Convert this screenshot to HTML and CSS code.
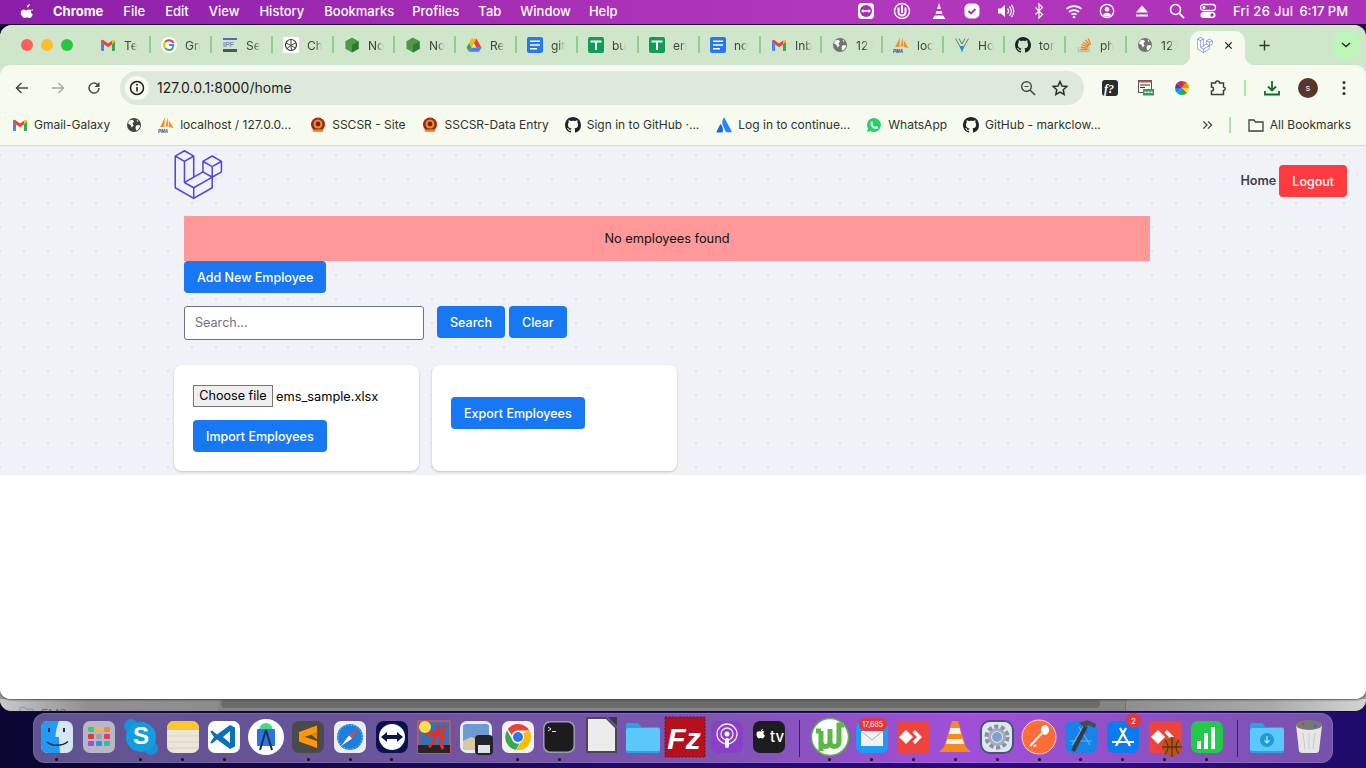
FILE: index.html
```html
<!DOCTYPE html>
<html lang="en">
<head>
<meta charset="utf-8">
<title>Employees</title>
<link rel="stylesheet" href="styles.css">
</head>
<body>
<svg class="defs" aria-hidden="true">
  <symbol id="gmail" viewBox="0 0 16 16"><path fill="#4285f4" d="M1 4v8.8A1.2 1.2 0 0 0 2.2 14H4V7.3z"/><path fill="#34a853" d="M15 4v8.8a1.2 1.2 0 0 1-1.2 1.2H12V7.3z"/><path fill="#ea4335" d="M1 4.2a1.4 1.4 0 0 1 2.2-1.1L8 6.6l4-2.9v3.6L8 10.2 4 7.3z"/><path fill="#fbbc04" d="M15 4.2a1.4 1.4 0 0 0-2.2-1.1L12 3.7v3.6z"/></symbol>
  <symbol id="globe" viewBox="0 0 16 16"><circle cx="8" cy="8" r="7" fill="currentColor"/><path fill="#f7faee" d="M3 3.6 6.6 2.7 8 4.6 6.4 6.6 7.6 8.4 5.6 10.4 4.6 8 2 6.6zM10 8.5l3.4-.6.8 1.6-2.4 3.6-1.6.4-.7-2.6zM10.5 2.4l2 1.5-1.2 1z"/></symbol>
  <symbol id="github" viewBox="0 0 16 16"><path fill="#1f2328" d="M8 0C3.58 0 0 3.58 0 8c0 3.54 2.29 6.53 5.47 7.59.4.07.55-.17.55-.38 0-.19-.01-.82-.01-1.49-2.01.37-2.53-.49-2.69-.94-.09-.23-.48-.94-.82-1.13-.28-.15-.68-.52-.01-.53.63-.01 1.08.58 1.23.82.72 1.21 1.87.87 2.33.66.07-.52.28-.87.51-1.07-1.78-.2-3.64-.89-3.64-3.95 0-.87.31-1.59.82-2.15-.08-.2-.36-1.02.08-2.12 0 0 .67-.21 2.2.82.64-.18 1.32-.27 2-.27s1.36.09 2 .27c1.53-1.04 2.2-.82 2.2-.82.44 1.1.16 1.92.08 2.12.51.56.82 1.27.82 2.15 0 3.07-1.87 3.75-3.65 3.95.29.25.54.73.54 1.48 0 1.07-.01 1.93-.01 2.2 0 .21.15.46.55.38A8.01 8.01 0 0 0 16 8c0-4.42-3.58-8-8-8z"/></symbol>
  <symbol id="node" viewBox="0 0 16 16"><path fill="#4f9a45" d="M8 .5 14.6 4.2v7.6L8 15.5 1.4 11.8V4.2z"/><path fill="#2f7a35" d="M8 8 14.6 4.2v7.6L8 15.5z"/></symbol>
  <symbol id="docs" viewBox="0 0 16 16"><rect width="16" height="16" rx="2" fill="#2a78ef"/><path fill="#fff" d="M3 3.5h10v1.6H3zM3 7.2h10v1.6H3zM3 10.9h7v1.6H3z"/></symbol>
  <symbol id="sheets" viewBox="0 0 16 16"><rect width="16" height="16" rx="2" fill="#0f9d58"/><path fill="#fff" d="M2.5 3.5h11v2h-4.500v7.500h-2V5.500h-4.500z"/></symbol>
  <symbol id="pma" viewBox="0 0 16 16"><path fill="#f0912d" d="M2 10 7 .5l-.6 9.500zM7.500 9.500 9.500.5l1 9zM11 10 10.800 3 15.500 11z"/></symbol>
  <symbol id="sscsr" viewBox="0 0 16 16"><circle cx="8" cy="7.500" r="7" fill="#a8201a"/><circle cx="8" cy="7" r="4.500" fill="#d9972a"/><circle cx="8" cy="7" r="2.400" fill="#8a1712"/><path fill="#d9972a" d="M2 12.500h12l-1.500 2.500h-9z"/></symbol>
  <symbol id="laravel" viewBox="0 0 50 52"><path fill="currentColor" d="M49.626 11.564a.809.809 0 0 1 .028.209v10.972a.8.8 0 0 1-.402.694l-9.209 5.302V39.25c0 .286-.152.55-.4.694L20.42 51.01c-.044.025-.092.041-.14.058-.018.006-.035.017-.054.022a.805.805 0 0 1-.41 0c-.022-.006-.042-.018-.063-.026-.044-.016-.09-.03-.132-.054L.402 39.944A.801.801 0 0 1 0 39.25V6.334c0-.072.01-.142.028-.21.006-.023.02-.044.028-.067.015-.042.029-.085.051-.124.015-.026.037-.047.055-.071.023-.032.044-.065.071-.093.023-.023.053-.04.079-.06.029-.024.055-.05.088-.069h.001l9.61-5.533a.802.802 0 0 1 .8 0l9.61 5.533h.002c.032.02.059.045.088.068.026.02.055.038.078.06.028.029.048.062.072.094.017.024.04.045.054.071.023.04.036.082.052.124.008.023.022.044.028.068a.809.809 0 0 1 .028.209v20.559l8.008-4.611v-10.51c0-.07.01-.141.028-.208.007-.024.02-.045.028-.068.016-.042.03-.085.052-.124.015-.026.037-.047.054-.071.024-.032.044-.065.072-.093.023-.023.052-.04.078-.06.03-.024.056-.05.088-.069h.001l9.611-5.533a.801.801 0 0 1 .8 0l9.61 5.533c.034.02.06.045.09.068.025.02.054.038.077.06.028.029.048.062.072.094.018.024.04.045.054.071.023.039.036.082.052.124.009.023.022.044.028.068zm-1.574 10.718v-9.124l-3.363 1.936-4.646 2.675v9.124l8.01-4.611zm-9.61 16.505v-9.13l-4.57 2.61-13.05 7.448v9.216l17.62-10.144zM1.602 7.719v31.068L19.22 48.93v-9.214l-9.204-5.209-.003-.002-.004-.002c-.031-.018-.057-.044-.086-.066-.025-.02-.054-.036-.076-.058l-.002-.003c-.026-.025-.044-.056-.066-.084-.02-.027-.044-.05-.06-.078l-.001-.003c-.018-.03-.029-.066-.042-.1-.013-.03-.03-.058-.038-.09v-.001c-.01-.038-.012-.078-.016-.117-.004-.03-.012-.06-.012-.09v-.002-21.481L4.965 9.654 1.602 7.72zm8.81-5.994L2.405 6.334l8.005 4.609 8.006-4.61-8.006-4.608zm4.164 28.764l4.645-2.674V7.719l-3.363 1.936-4.646 2.675v20.096l3.364-1.937zM39.243 7.164l-8.006 4.609 8.006 4.609 8.005-4.61-8.005-4.608zm-.801 10.605l-4.646-2.675-3.363-1.936v9.124l4.645 2.674 3.364 1.937v-9.124zM20.02 38.33l11.743-6.704 5.87-3.35-8-4.606-9.211 5.303-8.395 4.833 7.993 4.524z"/></symbol>
  <symbol id="anydesk" viewBox="0 0 42 45"><rect x="5" y="8" width="32" height="32" rx="3" fill="#ef443b"/><path fill="#fff" d="M14 17l7 7-7 7-7-7z"/><path fill="#fff" d="M23 17l7 7-7 7 -2.500-2.500 4.500-4.500-4.500-4.500z"/></symbol>
  <symbol id="folder" viewBox="0 0 42 45"><path fill="#2f9fe0" d="M4 12a2 2 0 0 1 2-2h10l4 4h16a2 2 0 0 1 2 2v22a2 2 0 0 1-2 2H6a2 2 0 0 1-2-2z"/><path fill="#5ac8fa" d="M4 17a2 2 0 0 1 2-2h30a2 2 0 0 1 2 2v19a2 2 0 0 1-2 2H6a2 2 0 0 1-2-2z"/></symbol>
</svg>

<header class="menubar">
  <svg class="apple" viewBox="0 0 16 18"><path fill="#fff" d="M11.200 1c.1 1-.3 2-.9 2.700-.6.700-1.600 1.300-2.500 1.200-.1-1 .4-2 1-2.600.6-.7 1.600-1.200 2.400-1.300zM14.300 6.400c-.1.100-1.800 1-1.800 3.100 0 2.400 2.100 3.200 2.200 3.300-.1.100-.4 1.200-1.100 2.300-.7 1-1.500 2-2.600 2-1.200 0-1.500-.7-2.900-.7s-1.800.7-2.900.7c-1.100 0-1.900-1.100-2.700-2.200C1 13.400.3 11.100 1.300 9.200c.6-1 1.700-1.700 2.800-1.700 1.200 0 2.100.8 2.900.8.800 0 1.800-.9 3.100-.9.500 0 2.600.1 4.200 2z"/></svg>
  <nav class="menus"><b>Chrome</b><span>File</span><span>Edit</span><span>View</span><span>History</span><span>Bookmarks</span><span class="pull2">Profiles</span><span class="pull1">Tab</span><span class="pull1">Window</span><span class="pull2">Help</span></nav>
  <div class="status">
    <svg class="st" viewBox="0 0 18 18"><rect x="1" y="1" width="16" height="16" rx="4" fill="#fff"/><circle cx="9" cy="9" r="6" fill="#a82fb5"/><path fill="#fff" d="M4 9l2.500-2v1.200h5V7L14 9l-2.500 2V9.800h-5V11z"/></svg>
    <svg class="st ml18" viewBox="0 0 18 18"><circle cx="9" cy="9" r="7.500" fill="none" stroke="#fff" stroke-width="1.400"/><path d="M5.500 5.500v4.500a3.500 3.500 0 0 0 7 0V5.500M9 3v8" fill="none" stroke="#fff" stroke-width="2"/></svg>
    <svg class="st ml19" viewBox="0 0 18 18"><path fill="#fff" d="M9 1l2 6H7zM6.400 9h5.200l.9 3h-7zM4.800 13.500h8.400l2.300 3.500h-13z"/></svg>
    <svg class="st ml15" viewBox="0 0 18 18"><rect x="1.500" y="1.500" width="15" height="15" rx="5" fill="#fff"/><path d="M5.500 9l2.500 2.500 4.500-4.500" fill="none" stroke="#a82fb5" stroke-width="1.800"/></svg>
    <svg class="st ml16" viewBox="0 0 18 18"><path fill="#fff" d="M1 6.500h3l4-3.500v12l-4-3.500H1z"/><path d="M10.500 6.500a3.500 3.500 0 0 1 0 5M12.500 4.500a6.500 6.500 0 0 1 0 9M14.500 3a9 9 0 0 1 0 12" fill="none" stroke="#fff" stroke-width="1.200"/></svg>
    <svg class="st ml15" viewBox="0 0 18 18"><path d="M5.500 5.500l7 7L9 16V2l3.500 3.500-7 7" fill="none" stroke="#fff" stroke-width="1.200"/></svg>
    <svg class="st ml17" viewBox="0 0 18 18"><path d="M1.500 7a11 11 0 0 1 15 0M4 10a7.500 7.500 0 0 1 10 0M6.500 12.700a3.800 3.800 0 0 1 5 0" fill="none" stroke="#fff" stroke-width="1.700"/><circle cx="9" cy="15" r="1.300" fill="#fff"/></svg>
    <svg class="st ml15" viewBox="0 0 18 18"><circle cx="9" cy="9" r="6.700" fill="none" stroke="#fff" stroke-width="1.300"/><circle cx="9" cy="7.300" r="2.300" fill="#fff"/><path fill="#fff" d="M4.800 13a5 5 0 0 1 8.400 0 5.800 5.800 0 0 1-8.400 0z"/></svg>
    <svg class="st ml17" viewBox="0 0 18 18"><path fill="#fff" d="M9 3.500l6 7H3zM3 12.500h12v2H3z"/></svg>
    <svg class="st ml17" viewBox="0 0 18 18"><circle cx="7.500" cy="7.500" r="5" fill="none" stroke="#fff" stroke-width="1.500"/><path d="M11.300 11.300l4.700 4.700" stroke="#fff" stroke-width="1.800"/></svg>
    <svg class="st ml13" viewBox="0 0 18 18"><rect x="1.500" y="2.500" width="15" height="6" rx="3" fill="none" stroke="#fff" stroke-width="1.300"/><circle cx="5" cy="5.500" r="1.500" fill="#fff"/><rect x="1.500" y="10" width="15" height="6" rx="3" fill="#fff"/><circle cx="13" cy="13" r="1.700" fill="#a82fb5"/></svg>
    <span class="clock">Fri 26 Jul</span><span class="clock-time">6:17 PM</span>
  </div>
</header>

<div class="window">
  <div class="tabstrip">
    <div class="lights"><i class="red"></i><i class="amber"></i><i class="green"></i></div>
    <div class="tab"><svg class="fav"><use href="#gmail"/></svg><span class="tt">Te</span></div>
    <div class="tab"><svg class="fav" viewBox="0 0 16 16"><circle cx="8" cy="8" r="8" fill="#fff"/><path d="M12.500 6.200A5 5 0 0 0 4.100 5" fill="none" stroke="#ea4335" stroke-width="2"/><path d="M4.100 5a5 5 0 0 0 0 6" fill="none" stroke="#fbbc04" stroke-width="2"/><path d="M4.100 11a5 5 0 0 0 8 .2" fill="none" stroke="#34a853" stroke-width="2"/><path fill="#4285f4" d="M8 7h5.200c.3 2-.3 3.600-1.200 4.800L10.500 10.500c.5-.4.800-1 .9-1.600H8z"/></svg><span class="tt">Gn</span></div>
    <div class="tab"><svg class="fav" viewBox="0 0 16 16"><path fill="#4a6fb5" d="M1 1h14v2H1z"/><text x="1" y="10" class="ip-t">IPF</text><path fill="#555" d="M1 12h14v3H1z"/></svg><span class="tt">Se</span></div>
    <div class="tab"><svg class="fav" viewBox="0 0 16 16"><rect width="16" height="16" rx="2" fill="#fff"/><circle cx="8" cy="8" r="5.500" fill="none" stroke="#333" stroke-width="1.200"/><path d="M8 2.500v6l4.500 2.500M3 6l5 2.500-4 3M13 5.500 8 8.500l.5 5" fill="none" stroke="#333" stroke-width=".9"/></svg><span class="tt">Ch</span></div>
    <div class="tab"><svg class="fav"><use href="#node"/></svg><span class="tt">No</span></div>
    <div class="tab"><svg class="fav"><use href="#node"/></svg><span class="tt">No</span></div>
    <div class="tab"><svg class="fav" viewBox="0 0 16 16"><path fill="#fbbc04" d="M5.500 1.500h5l-5 9L3 6z"/><path fill="#34a853" d="M.5 10.700 3 6l2.500 4.500 -2.500 4.200z"/><path fill="#ea4335" d="M10.500 1.500 15.500 10.700h-5L8 6z"/><path fill="#4285f4" d="M5.500 10.700h10L13 14.700H3z"/></svg><span class="tt">Re</span></div>
    <div class="tab"><svg class="fav"><use href="#docs"/></svg><span class="tt">git</span></div>
    <div class="tab"><svg class="fav"><use href="#sheets"/></svg><span class="tt">bu</span></div>
    <div class="tab"><svg class="fav"><use href="#sheets"/></svg><span class="tt">en</span></div>
    <div class="tab"><svg class="fav"><use href="#docs"/></svg><span class="tt">no</span></div>
    <div class="tab"><svg class="fav"><use href="#gmail"/></svg><span class="tt">Inb</span></div>
    <div class="tab"><svg class="fav globe-tab"><use href="#globe"/></svg><span class="tt tt-long">127</span></div>
    <div class="tab"><svg class="fav" viewBox="0 0 16 16"><use href="#pma" width="16" height="16"/><text x="0" y="15.500" class="pma-t">PMA</text></svg><span class="tt">loc</span></div>
    <div class="tab"><svg class="fav" viewBox="0 0 16 16"><path fill="none" stroke="#6b7a6b" stroke-width="1" d="M1.500 1.500 8 13 14.500 1.500M5 1.500 8 7l3-5.500"/><path fill="#2a8fd8" d="M5.500 9h5L8 15.500z"/></svg><span class="tt">Ho</span></div>
    <div class="tab"><svg class="fav"><use href="#github"/></svg><span class="tt">tor</span></div>
    <div class="tab"><svg class="fav" viewBox="0 0 16 16"><path d="M2.500 10v4.500h10.500V10" fill="none" stroke="#bcbbbb" stroke-width="1.400"/><path d="M4.500 12.500h7M4.700 10.200l6.800.9M5.500 7.700l6.500 2.200M7 5.200l5.700 3.700M9.500 3l4.200 5.300M12.200 1.500l2.500 6" fill="none" stroke="#f48024" stroke-width="1.300"/></svg><span class="tt">ph</span></div>
    <div class="tab tab-last"><svg class="fav globe-tab"><use href="#globe"/></svg><span class="tt tt-long">127</span></div>
    <div class="tab-active"><svg class="fav lv"><use href="#laravel"/></svg><svg class="tab-x" viewBox="0 0 10 10"><path d="M1.500 1.500l7 7M8.500 1.500l-7 7" stroke="#1f1f1f" stroke-width="1.400"/></svg></div>
    <svg class="newtab" viewBox="0 0 12 12"><path d="M6 .5v11M.5 6h11" stroke="#2c3a2c" stroke-width="1.500"/></svg>
    <div class="tabmenu"><svg viewBox="0 0 10 6"><path d="M1 1l4 3.500L9 1" fill="none" stroke="#1f2a1f" stroke-width="1.500"/></svg></div>
  </div>

  <div class="toolbar">
    <svg class="tbi" viewBox="0 0 16 16"><path d="M14 8H2.500M7.500 3l-5 5 5 5" fill="none" stroke="#444c44" stroke-width="1.500"/></svg>
    <svg class="tbi ml20" viewBox="0 0 16 16"><path d="M2 8h11.500M8.500 3l5 5-5 5" fill="none" stroke="#a3a8a1" stroke-width="1.500"/></svg>
    <svg class="tbi ml20" viewBox="0 0 16 16"><path d="M13 8a5 5 0 1 1-1.500-3.500L13 6" fill="none" stroke="#444c44" stroke-width="1.500"/><path fill="#444c44" d="M13.500 2v5h-5z"/></svg>
    <div class="omnibox">
      <span class="infochip"><svg viewBox="0 0 16 16"><circle cx="8" cy="8" r="6.500" fill="none" stroke="#1f1f1f" stroke-width="1.500"/><path d="M8 7v4.500" stroke="#1f1f1f" stroke-width="1.600"/><circle cx="8" cy="4.800" r="1" fill="#1f1f1f"/></svg></span>
      <span class="url">127.0.0.1:8000/home</span>
      <svg class="omni-i push" viewBox="0 0 16 16"><circle cx="6.500" cy="6.500" r="4.800" fill="none" stroke="#444c44" stroke-width="1.400"/><path d="M10 10l5 5" stroke="#444c44" stroke-width="1.600"/><path d="M4.500 6.500h4" stroke="#444c44" stroke-width="1.200"/></svg>
      <svg class="omni-i ml16" viewBox="0 0 16 16"><path d="M8 1.500l2 4.500 4.800.5-3.600 3.200 1 4.800L8 12l-4.200 2.500 1-4.800L1.200 6.500 6 6z" fill="none" stroke="#2a332a" stroke-width="1.500"/></svg>
    </div>
    <svg class="tbx ml18" viewBox="0 0 16 16"><rect width="16" height="16" rx="3" fill="#2b2b2b"/><text x="2" y="12.500" class="fq">f?</text></svg>
    <svg class="tbx ml20" viewBox="0 0 16 16"><rect x=".5" y=".5" width="13" height="12" fill="#f7faee" stroke="#555" stroke-width="1"/><path fill="#c0504d" d="M.5.500h13v2h-13z"/><path d="M2 5h10M2 7.500h5" stroke="#333" stroke-width="1"/><rect x="5" y="9" width="11" height="6.500" fill="#3f9a55"/><path d="M6.500 12.200h8" stroke="#fff" stroke-width="1.500" stroke-dasharray="2 1"/></svg>
    <svg class="tbx ml20" viewBox="0 0 16 16"><path fill="#e53935" d="M8 8V1a7 7 0 0 1 4.500 1.600z"/><path fill="#fb8c00" d="M8 8l4.500-5.400A7 7 0 0 1 15 8z"/><path fill="#fdd835" d="M8 8h7a7 7 0 0 1-2 5z"/><path fill="#43a047" d="M8 8l5 5a7 7 0 0 1-5 2z"/><path fill="#00acc1" d="M8 8v7a7 7 0 0 1-5-2z"/><path fill="#1e88e5" d="M8 8l-5 5a7 7 0 0 1-2-5z"/><path fill="#5e35b1" d="M8 8H1a7 7 0 0 1 2-5z"/><path fill="#d81b60" d="M8 8 3 3a7 7 0 0 1 5-2z"/></svg>
    <svg class="tbx ml20" viewBox="0 0 16 16"><path d="M1.500 3H5.500a2 2 0 0 1 4 0h4v4a1.700 1.700 0 0 1 0 3.500V14.500H1.500V11a2 2 0 0 0 0-4z" fill="none" stroke="#33413a" stroke-width="1.500"/></svg>
    <i class="tb-sep"></i>
    <svg class="tbx ml18" viewBox="0 0 16 16"><path d="M8 1v9M4 6.500 8 10.500l4-4" fill="none" stroke="#0b6b2f" stroke-width="1.800"/><path d="M1 11v3.500h14V11" fill="none" stroke="#0b6b2f" stroke-width="1.800"/></svg>
    <span class="avatar">s</span>
    <svg class="dots3" viewBox="0 0 4 16"><circle cx="2" cy="2.500" r="1.500" fill="#333"/><circle cx="2" cy="8" r="1.500" fill="#333"/><circle cx="2" cy="13.500" r="1.500" fill="#333"/></svg>
  </div>

  <div class="bookmarks">
    <a class="bm"><svg class="fav"><use href="#gmail"/></svg>Gmail-Galaxy</a>
    <a class="bm"><svg class="fav globe-dark"><use href="#globe"/></svg></a>
    <a class="bm"><svg class="fav" viewBox="0 0 16 16"><use href="#pma" width="16" height="16"/><text x="0" y="15.500" class="pma-t">PMA</text></svg>localhost / 127.0.0...</a>
    <a class="bm nudge3"><svg class="fav"><use href="#sscsr"/></svg>SSCSR - Site</a>
    <a class="bm nudge1"><svg class="fav"><use href="#sscsr"/></svg>SSCSR-Data Entry</a>
    <a class="bm"><svg class="fav"><use href="#github"/></svg>Sign in to GitHub ·...</a>
    <a class="bm nudge1"><svg class="fav" viewBox="0 0 16 16"><path fill="#1868db" d="M5 7.500c-.3-.4-.7-.3-.9.100L.5 14.700c-.2.400 0 .8.500.8h5c.2 0 .4-.1.500-.3 1-2.200.4-5.400-1.500-7.700z"/><path fill="#2684ff" d="M7.600.9C6 3.400 5.800 6.500 7.100 9.100l2.600 5.700c.1.200.3.400.5.400h5c.4 0 .700-.4.500-.8L8.500.9c-.2-.4-.7-.4-.9 0z"/></svg>Log in to continue...</a>
    <a class="bm"><svg class="fav" viewBox="0 0 16 16"><path fill="#25d366" d="M8 1a7 7 0 0 0-6 10.600L1 15l3.500-.9A7 7 0 1 0 8 1z"/><path fill="#fff" d="M5.800 4.500c.3 0 .5 0 .6.300l.7 1.500c0 .2 0 .4-.2.600l-.5.600c.6 1.200 1.500 2 2.800 2.600l.7-.8c.2-.2.300-.2.500-.1l1.500.7c.2.100.3.300.2.600-.2 1-1 1.600-2 1.600-2.900-.2-5.500-2.800-5.600-5.600 0-1.100.5-1.800 1.300-2z"/></svg>WhatsApp</a>
    <a class="bm"><svg class="fav"><use href="#github"/></svg>GitHub - markclow...</a>
    <span class="bm-right">
      <svg class="chev" viewBox="0 0 12 10"><path d="M1.500 1l4 4-4 4M6.500 1l4 4-4 4" fill="none" stroke="#3a443a" stroke-width="1.400"/></svg>
      <i class="bm-sep"></i>
      <a class="bm all"><svg class="fav" viewBox="0 0 16 16"><path d="M1 3h5l1.500 2H15v9H1z" fill="none" stroke="#3a443a" stroke-width="1.300"/></svg>All Bookmarks</a>
    </span>
  </div>

  <main class="page">
    <section class="app">
      <div class="topnav">
        <svg class="logo"><use href="#laravel"/></svg>
        <div class="navlinks"><a class="home">Home</a><button class="btn logout" type="button">Logout</button></div>
      </div>
      <div class="content">
        <div class="alert">No employees found</div>
        <button class="btn" type="button">Add New Employee</button>
        <form class="search">
          <input class="search-input" type="text" placeholder="Search...">
          <button class="btn search-go" type="button">Search</button>
          <button class="btn" type="button">Clear</button>
        </form>
        <div class="cards">
          <div class="card">
            <div class="file"><button class="choose" type="button">Choose file</button><span class="fname">ems_sample.xlsx</span></div>
            <button class="btn" type="button">Import Employees</button>
          </div>
          <div class="card card-export">
            <button class="btn" type="button">Export Employees</button>
          </div>
        </div>
      </div>
    </section>
  </main>
</div>

<div class="behind">
  <div class="b-left"><svg class="b-folder" viewBox="0 0 16 12"><path d="M1 11V1h5l1.500 2H15v8z" fill="none" stroke="#6f93c4" stroke-width="1"/></svg><span>EMS</span></div>
  <div class="b-track"><div class="b-thumb"></div></div>
  <div class="b-right"></div>
</div>

<footer class="dock">
  <div class="dk"><svg viewBox="0 0 42 45"><rect x="5" y="8" width="32" height="32" rx="7" fill="#d6e6f2"/><path fill="#1f9bf5" d="M12 8h11c-2 5-3.500 10-3.500 16H23c0 5 .5 11 1 16H12a7 7 0 0 1-7-7V15a7 7 0 0 1 7-7z"/><path d="M13 15v4M28 15v4" stroke="#1d2a44" stroke-width="2"/><path d="M11 29c5 4.500 15 4.500 21-.5" fill="none" stroke="#1d2a44" stroke-width="1.600"/></svg><i class="dot"></i></div>
  <div class="dk"><svg viewBox="0 0 42 45"><rect x="5" y="8" width="32" height="32" rx="7" fill="#b9b7c7"/><g><rect x="10" y="14" width="6" height="5" rx="1" fill="#3ccf5b"/><rect x="18" y="14" width="6" height="5" rx="1" fill="#f5b53a"/><rect x="26" y="14" width="6" height="5" rx="1" fill="#f28c2a"/><rect x="10" y="21" width="6" height="5" rx="1" fill="#e13b3b"/><rect x="18" y="21" width="6" height="5" rx="1" fill="#9ea3a8"/><rect x="26" y="21" width="6" height="5" rx="1" fill="#e03a6a"/><rect x="10" y="28" width="6" height="5" rx="1" fill="#9a52d6"/><rect x="18" y="28" width="6" height="5" rx="1" fill="#2f8df0"/><rect x="26" y="28" width="6" height="5" rx="1" fill="#1fc796"/></g></svg><i class="dot dot-off"></i></div>
  <div class="dk"><svg viewBox="0 0 42 45"><circle cx="11" cy="13" r="7" fill="#1a8fd8"/><circle cx="31" cy="35" r="7" fill="#1a8fd8"/><circle cx="21" cy="24" r="15" fill="#119ee0"/><text x="21" y="31" class="d-s">S</text></svg><i class="dot"></i></div>
  <div class="dk"><svg viewBox="0 0 42 45"><rect x="5" y="8" width="32" height="32" rx="7" fill="#ece6d8"/><path fill="#fdc72f" d="M5 15a7 7 0 0 1 7-7h18a7 7 0 0 1 7 7v2H5z"/><path d="M5 23h32M5 29h32M5 35h32" stroke="#d8d2c4" stroke-width="1"/></svg><i class="dot"></i></div>
  <div class="dk"><svg viewBox="0 0 42 45"><rect x="5" y="8" width="32" height="32" rx="7" fill="#fff"/><path fill="#0a70b8" d="M27 12l5 2.500v19L27 36 14 26.500 9 30.500l-1.800-1L11 24l-3.800-5.500 1.800-1 5 4zM27 18l-7 6 7 6z"/></svg><i class="dot"></i></div>
  <div class="dk"><svg viewBox="0 0 42 45"><circle cx="21" cy="24" r="18" fill="#fff"/><path fill="#3ddc84" d="M14.500 16a6.500 6 0 0 1 13 0z"/><rect x="12" y="16" width="18" height="17" rx="1" fill="#2a74e6"/><path d="M21 17l-6 20M21 17l6 20" stroke="#1d2f4a" stroke-width="2"/></svg><i class="dot dot-off"></i></div>
  <div class="dk"><svg viewBox="0 0 42 45"><rect x="5" y="8" width="32" height="32" rx="7" fill="#4a4a4a"/><path fill="#ff9800" d="M12 19l18-6.500v7L12 26zM12 22l18 6v7l-18-6.500z"/><path fill="#e08600" d="M30 26.500v-7l-6 2z"/></svg><i class="dot"></i></div>
  <div class="dk"><svg viewBox="0 0 42 45"><rect x="5" y="8" width="32" height="32" rx="7" fill="#eceef0"/><circle cx="21" cy="24" r="13" fill="#1c7fdc"/><circle cx="21" cy="24" r="12" fill="none" stroke="#bfe0f8" stroke-width="1" stroke-dasharray="1 2"/><path fill="#e9423a" d="M30 15l-10 7.500 3 3z"/><path fill="#fff" d="M12 33l8-10.500 3 3z"/></svg><i class="dot"></i></div>
  <div class="dk"><svg viewBox="0 0 42 45"><rect x="5" y="8" width="32" height="32" rx="8" fill="#0b1250"/><circle cx="21" cy="24" r="13" fill="#fff"/><path fill="#0b1250" d="M10 24l6-5v3h10v-3l6 5-6 5v-3H16v3z"/></svg><i class="dot"></i></div>
  <div class="dk"><svg viewBox="0 0 42 45"><rect x="5" y="8" width="32" height="32" fill="#3a6fb0" stroke="#e05550" stroke-width="1.500"/><path fill="#2a2320" d="M5 32h32v8H5z"/><circle cx="12" cy="14" r="6" fill="#f7e04b"/><path d="M16 34c5-4 8-14 10-22M32 12c-3 8-7 14-2 24M13 22c6-3 14-1 19 3" fill="none" stroke="#f02a1e" stroke-width="3"/></svg><i class="dot dot-off"></i></div>
  <div class="dk"><svg viewBox="0 0 42 45"><rect x="5" y="8" width="32" height="32" rx="7" fill="#e9edf0"/><rect x="8" y="11" width="26" height="26" rx="3" fill="#6a9bd2"/><path fill="#d8c8a8" d="M8 28l8-4 8 3 10-2v9a3 3 0 0 1-3 3H11a3 3 0 0 1-3-3z"/><rect x="20" y="22" width="18" height="20" rx="4" fill="#20242c"/><rect x="23" y="32" width="12" height="8" fill="#dfe3e6"/></svg><i class="dot dot-off"></i></div>
  <div class="dk"><svg viewBox="0 0 42 45"><rect x="5" y="8" width="32" height="32" rx="7" fill="#f2f2f2"/><path fill="#ea4335" d="M21 11a13 13 0 0 1 11.300 6.500H21a6.500 6.500 0 0 0-6.200 4.500l-4-5.800A13 13 0 0 1 21 11z"/><path fill="#34a853" d="M10 17.500 15.600 27.500a6.500 6.500 0 0 0 6.900 3l-3.500 6.400A13 13 0 0 1 10 17.500z"/><path fill="#fbbc04" d="M32.300 17.500A13 13 0 0 1 19.500 37l5.300-9.500a6.500 6.500 0 0 0 .5-6.500z"/><circle cx="21" cy="24" r="6" fill="#fff"/><circle cx="21" cy="24" r="5" fill="#2a78e8"/></svg><i class="dot"></i></div>
  <div class="dk"><svg viewBox="0 0 42 45"><rect x="5" y="8" width="32" height="32" rx="7" fill="#9aa0a8"/><rect x="6.500" y="9.500" width="29" height="29" rx="6" fill="#1c1c1e"/><path d="M10 14l3 2-3 2" fill="none" stroke="#e8e8e8" stroke-width="1"/><path d="M14 18.500h4" stroke="#e8e8e8" stroke-width="1"/></svg><i class="dot"></i></div>
  <div class="dk"><svg viewBox="0 0 42 45"><path fill="#4a4a4a" d="M6 4h20l11 11v25H6z"/><path fill="#ececec" d="M8 6h18l9 9v23H8z"/><path fill="#3a3a3a" d="M28 4h9v9z"/></svg><i class="dot dot-off"></i></div>
  <div class="dk"><svg viewBox="0 0 42 45"><use href="#folder"/></svg><i class="dot dot-off"></i></div>
  <div class="dk"><svg viewBox="0 0 42 45"><rect x="1" y="4" width="40" height="40" fill="#b5101d" stroke="#7a0a14" stroke-width="1" stroke-dasharray="2 1.500"/><text x="20" y="36" class="d-fz">Fz</text></svg><i class="dot dot-off"></i></div>
  <div class="dk"><svg viewBox="0 0 42 45"><rect x="5" y="8" width="32" height="32" rx="7" fill="#8a3fc9"/><circle cx="21" cy="21" r="10" fill="none" stroke="#f3e6fb" stroke-width="1.300"/><circle cx="21" cy="21" r="6" fill="none" stroke="#f3e6fb" stroke-width="1.300"/><circle cx="21" cy="21" r="2.500" fill="#fff"/><rect x="19" y="25" width="4" height="10" rx="2" fill="#fff"/></svg><i class="dot dot-off"></i></div>
  <div class="dk"><svg viewBox="0 0 42 45"><rect x="5" y="8" width="32" height="32" rx="7" fill="#1b1d1e"/><text x="22" y="29" class="d-tv">tv</text><path fill="#fff" d="M13 18.500c1-.8 2.800-.8 3.500 0-1.600 1-1.300 3.200.4 3.900-.6 1.600-1.600 3-2.500 3-.7 0-1-.4-1.800-.4s-1.200.4-1.800.4c-1.300 0-3.400-4.500-1.700-6.400 1-1.100 2.400-.8 3.900-.5zM13.100 18c0-1 .8-2 1.900-2.100 0 1.100-.8 2.100-1.900 2.100z"/></svg><i class="dot dot-off"></i></div>
  <i class="dk-sep"></i>
  <div class="dk"><svg viewBox="0 0 42 45"><circle cx="21" cy="24" r="18.500" fill="#fff" stroke="#59b944" stroke-width="1.500"/><path d="M12 18v11a4.500 4.500 0 0 0 9 0V16M21 29a4.500 4.500 0 0 0 9 0V12h5" fill="none" stroke="#59b944" stroke-width="5"/><path d="M12 18H7M12 29v9" stroke="#59b944" stroke-width="5" fill="none"/></svg><i class="dot"></i></div>
  <div class="dk"><svg viewBox="0 0 42 45"><rect x="5" y="8" width="32" height="32" rx="7" fill="#1d9bf6"/><rect x="10" y="18" width="22" height="15" fill="#f2f2f2"/><path d="M10 18l11 9 11-9" fill="none" stroke="#a8b0b8" stroke-width="1"/></svg><i class="dot"></i><span class="badge badge-wide">17,685</span></div>
  <div class="dk"><svg viewBox="0 0 42 45"><use href="#anydesk"/></svg><i class="dot"></i></div>
  <div class="dk"><svg viewBox="0 0 42 45"><path fill="#f58a1f" d="M18 8h6l8 26 5 5H5l5-5z"/><path fill="#f2f2f2" d="M16.500 15h9l1.500 6H15zM13.500 26h15l1.500 5H12z"/></svg><i class="dot"></i></div>
  <div class="dk"><svg viewBox="0 0 42 45"><rect x="5" y="8" width="32" height="32" rx="9" fill="#dfe6f3" stroke="#46566e" stroke-width="2"/><circle cx="21" cy="24" r="10" fill="none" stroke="#8a93a0" stroke-width="5" stroke-dasharray="4 2.300"/><circle cx="21" cy="24" r="7.500" fill="none" stroke="#a7adb7" stroke-width="3"/><circle cx="21" cy="24" r="5" fill="#7fa1d8"/></svg><i class="dot"></i></div>
  <div class="dk"><svg viewBox="0 0 42 45"><circle cx="21" cy="24" r="17" fill="#ff6c37" stroke="#f5d9cc" stroke-width="1"/><path d="M12 33 24 20" stroke="#fff" stroke-width="2"/><ellipse cx="27" cy="17" rx="4" ry="5" fill="#fff"/><path d="M15 34l4-1-2-2z" fill="#fff"/></svg><i class="dot"></i></div>
  <div class="dk"><svg viewBox="0 0 42 45"><rect x="5" y="8" width="32" height="32" rx="7" fill="#1782e8"/><path d="M12 32 23 14M30 32 19 14M10 28h22" stroke="#64b5f6" stroke-width="1.200" fill="none"/><path d="M13 38 26 13" stroke="#3a3a3c" stroke-width="4"/><path fill="#4a4a4e" d="M19 10l8-3 9 4-1 4-7-3-3 3z"/></svg><i class="dot"></i></div>
  <div class="dk"><svg viewBox="0 0 42 45"><rect x="5" y="8" width="32" height="32" rx="7" fill="#0a7cf0"/><path d="M14 33 24 15M28 33 18 15M10 29h22" stroke="#fff" stroke-width="2.200" fill="none"/></svg><i class="dot"></i><span class="badge">2</span></div>
  <div class="dk"><svg viewBox="0 0 42 45"><use href="#anydesk"/><circle cx="28" cy="34" r="10" fill="#b4541c"/><path d="M18 34h20M28 24v20M21 27c4 4 4 10 0 14M35 27c-4 4-4 10 0 14" stroke="#4a2008" stroke-width="1" fill="none"/></svg><i class="dot"></i></div>
  <div class="dk"><svg viewBox="0 0 42 45"><rect x="5" y="8" width="32" height="32" rx="7" fill="#22c94a"/><rect x="11" y="28" width="4" height="8" fill="#fff"/><rect x="18" y="20" width="4" height="16" fill="#fff"/><rect x="25" y="14" width="4" height="22" fill="#fff"/></svg><i class="dot"></i></div>
  <i class="dk-sep"></i>
  <div class="dk"><svg viewBox="0 0 42 45"><use href="#folder"/><circle cx="21" cy="27" r="7" fill="#1d9ad8"/><path d="M21 23v7M18.500 27.500 21 30l2.500-2.500" fill="none" stroke="#bde8fb" stroke-width="1.200"/></svg><i class="dot dot-off"></i></div>
  <div class="dk"><svg viewBox="0 0 42 45"><path fill="#e6e6e6" d="M8 12h26l-3 26a3 3 0 0 1-3 2H14a3 3 0 0 1-3-2z"/><ellipse cx="21" cy="12" rx="13" ry="5" fill="#77787a"/><circle cx="15" cy="11" r="1.500" fill="#c94040"/><circle cx="23" cy="10" r="1.500" fill="#3f9a55"/><circle cx="27" cy="13" r="1.500" fill="#3f6ab0"/><path d="M15 20l2 16M21 20v16M27 20l-2 16" stroke="#c9c9c9" stroke-width="1"/></svg><i class="dot dot-off"></i></div>
</footer>
</body>
</html>
```

FILE: styles.css
```css
* { box-sizing: border-box; }
html, body { margin: 0; padding: 0; }
body {
  width: 1366px;
  height: 768px;
  overflow: hidden;
  display: flex;
  flex-direction: column;
  font-family: Inter, "Liberation Sans", sans-serif;
  background: linear-gradient(90deg, #0a0530 0%, #140a55 30%, #230a7a 60%, #2c0c85 85%, #1d0a68 100%);
}
.defs { position: absolute; width: 0; height: 0; }
.menubar {
  height: 25px;
  flex: none;
  display: flex;
  align-items: center;
  padding: 0 0 2px 20px;
  border-bottom: 1px solid #14081c;
  color: #fff;
  font-size: 13px;
  background: linear-gradient(90deg, #8a1fa9 0%, #a52db4 35%, #b138bd 60%, #ad31b8 100%);
}
.apple { width: 14px; height: 16px; margin-right: 19px; }
.menus { display: flex; gap: 20px; }
.menus b { font-weight: 700; }
.menus span { font-weight: 500; }
.pull1 { margin-left: -1px; }
.pull2 { margin-left: -2px; }
.status { margin-left: auto; display: flex; align-items: center; margin-right: 18px; }
.st { width: 18px; height: 18px; }
.clock { margin-left: 16px; font-weight: 500; letter-spacing: .3px; }
.clock-time { margin-left: 6px; font-weight: 500; }
.ml13 { margin-left: 13px; } .ml15 { margin-left: 15px; } .ml16 { margin-left: 16px; }
.ml17 { margin-left: 17px; } .ml18 { margin-left: 18px; } .ml19 { margin-left: 19px; }
.ml20 { margin-left: 20px; }

.window {
  height: 674px;
  flex: none;
  position: relative;
  z-index: 1;
  display: flex;
  flex-direction: column;
  border-radius: 12px 12px 10px 10px;
  overflow: hidden;
  background: #cfe6cb;
  box-shadow: 0 1px 2px rgba(0, 0, 0, .55);
}
.tabstrip {
  height: 40px;
  flex: none;
  display: flex;
  align-items: flex-end;
  background: #cfe6cb;
  padding-left: 90px;
  position: relative;
}
.lights { position: absolute; left: 21px; top: 14px; display: flex; gap: 8px; }
.lights i { width: 12px; height: 12px; border-radius: 50%; }
.red { background: #fe5f57; }
.amber { background: #febc2e; }
.green { background: #27c840; }
.tab {
  width: 61px;
  height: 34px;
  display: flex;
  align-items: center;
  padding: 0 0 6px 10px;
  border-right: 2px solid transparent;
  border-image: linear-gradient(#cfe6cb 0 6px, #8fcf8e 6px 22px, #cfe6cb 22px) 1;
  flex: none;
}
.tab-last { border-image: none; border-right-color: transparent; }
.fav { width: 16px; height: 16px; flex: none; }
.tt {
  margin-left: 8px;
  white-space: nowrap;
  font-size: 12px;
  color: #3d463d;
  -webkit-mask-image: linear-gradient(90deg, #000 55%, rgba(0, 0, 0, .1) 90%);
  mask-image: linear-gradient(90deg, #000 55%, rgba(0, 0, 0, .1) 90%);
}
.tt-long {
  -webkit-mask-image: linear-gradient(90deg, #000 40%, rgba(0, 0, 0, .05) 72%);
  mask-image: linear-gradient(90deg, #000 40%, rgba(0, 0, 0, .05) 72%);
}
.globe-tab { color: #6f746f; }
.globe-dark { color: #3f4440; }
.tab-active {
  width: 55px;
  height: 34px;
  margin-left: 2px;
  background: #f7faee;
  border-radius: 10px 10px 0 0;
  display: flex;
  align-items: center;
  padding: 0 0 6px 7px;
  flex: none;
  position: relative;
}
.tab-active::before,
.tab-active::after {
  content: "";
  position: absolute;
  bottom: 0;
  width: 10px;
  height: 10px;
}
.tab-active::before { left: -10px; background: radial-gradient(circle at 0 0, transparent 10px, #f7faee 10.5px); }
.tab-active::after { right: -10px; background: radial-gradient(circle at 100% 0, transparent 10px, #f7faee 10.5px); }
.lv { color: #5b67e0; }
.tab-x { width: 9px; height: 9px; margin-left: 11px; }
.newtab { width: 11px; height: 11px; margin: 0 0 14px 14px; flex: none; }
.tabmenu {
  width: 28px;
  height: 28px;
  margin: 0 6px 6px auto;
  background: #bdf6b8;
  border-radius: 10px;
  display: flex;
  align-items: center;
  justify-content: center;
}
.tabmenu svg { width: 10px; height: 6px; }

.toolbar {
  height: 43px;
  flex: none;
  display: flex;
  align-items: center;
  background: #f7faee;
  padding: 2px 0 0 14px;
  border-radius: 10px 10px 0 0;
}
.tbi { width: 16px; height: 16px; flex: none; }
.omnibox {
  width: 964px;
  height: 34px;
  margin-left: 18px;
  background: #dee9d9;
  border-radius: 17px;
  display: flex;
  align-items: center;
  padding: 0 16px 0 5px;
  flex: none;
}
.infochip {
  width: 24px;
  height: 24px;
  border-radius: 50%;
  background: #f7faee;
  display: flex;
  align-items: center;
  justify-content: center;
}
.infochip svg { width: 16px; height: 16px; }
.url { margin-left: 8px; font-size: 14px; color: #1f1f1f; }
.omni-i { width: 16px; height: 16px; flex: none; }
.push { margin-left: auto; }
.tbx { width: 16px; height: 16px; flex: none; }
.tb-sep { width: 2px; height: 16px; background: #a9e8a4; margin-left: 18px; flex: none; }
.avatar {
  width: 20px;
  height: 20px;
  border-radius: 50%;
  background: #57362a;
  color: #eee;
  font-size: 9px;
  display: flex;
  align-items: center;
  justify-content: center;
  margin-left: 18px;
  flex: none;
}
.dots3 { width: 4px; height: 16px; margin-left: 24px; flex: none; }
.fq { font: italic 700 12px "Liberation Serif", serif; fill: #fff; }
.pma-t { font: italic 700 4.5px "Liberation Sans", sans-serif; fill: #27408b; }
.ip-t { font: 700 7px "Liberation Sans", sans-serif; fill: #7a8fb5; }

.bookmarks {
  height: 38px;
  flex: none;
  display: flex;
  align-items: center;
  gap: 16px;
  padding: 0 15px 4px 12px;
  background: #f7faee;
  border-bottom: 1px solid #d9dcd4;
  font-size: 12px;
  color: #2d342d;
}
.bm { display: flex; align-items: center; gap: 6px; white-space: nowrap; }
.nudge3 { margin-left: 3px; }
.nudge1 { margin-left: 1px; }
.bm-right { margin-left: auto; display: flex; align-items: center; }
.chev { width: 11px; height: 10px; }
.bm-sep { width: 2px; height: 16px; background: #a9e8a4; margin: 0 17px 0 16px; }

.page { flex: 1; background: #fff; }
.app {
  height: 329px;
  background-color: #f1f2f7;
  background-image: radial-gradient(circle, #dfe1e7 1.2px, transparent 1.4px);
  background-size: 24px 24px;
  background-position: 12px -3px;
}
.topnav {
  height: 70px;
  display: flex;
  justify-content: space-between;
  padding: 4px 19px 0 174px;
}
.logo { width: 49px; height: 50px; color: #4f46e5; }
.navlinks { display: flex; align-items: center; gap: 3px; height: 32px; margin-top: 15px; }
.home { font-size: 12.6px; font-weight: 600; color: #374151; padding-bottom: 2px; }
.btn {
  height: 32px;
  padding: 0 13px;
  border: 0;
  border-radius: 4px;
  background: #1877f2;
  color: #fff;
  font: 500 12.5px Inter, "Liberation Sans", sans-serif;
  display: block;
}
.logout { background: #ff3b3f; }
.content { margin-left: 184px; width: 966px; }
.alert {
  height: 45px;
  padding-bottom: 1px;
  background: #ff9999;
  color: #111;
  font-size: 12.8px;
  display: flex;
  align-items: center;
  justify-content: center;
}
.search { display: flex; align-items: flex-start; margin-top: 13px; gap: 4px; }
.search-input {
  width: 240px;
  height: 34px;
  margin-right: 9px;
  padding: 0 10px 1px;
  border: 1px solid #6b7280;
  border-radius: 3px;
  background: #fff;
  font: 400 12.6px Inter, "Liberation Sans", sans-serif;
}
.search-input::placeholder { color: #6b7280; opacity: 1; }
.cards { display: flex; gap: 13px; margin: 25px 0 0 -10px; }
.card {
  width: 245px;
  height: 106px;
  padding: 20px 19px;
  background: #fff;
  border-radius: 8px;
  box-shadow: 0 1px 3px rgba(0, 0, 0, .12), 0 1px 2px rgba(0, 0, 0, .08);
}
.card-export { padding-top: 32px; }
.file { display: flex; align-items: center; margin-bottom: 13px; height: 22px; }
.choose {
  height: 22px;
  width: 80px;
  padding: 0 0 1px;
  border: 1px solid #767676;
  border-radius: 0;
  background: #efefef;
  color: #000;
  font: 400 12.6px Inter, "Liberation Sans", sans-serif;
  flex: none;
}
.fname { margin-left: 3px; font-size: 12.8px; color: #000; }

.behind {
  height: 26px;
  margin-top: -13px;
  padding-top: 13px;
  flex: none;
  display: flex;
  border-radius: 0 0 12px 12px;
  overflow: hidden;
  background: #9a9a9a;
  border-bottom: 1px solid #111;
}
.b-left {
  width: 218px;
  background: linear-gradient(90deg, #c9c8ca, #918f92 40%, #8e8d8e);
  display: flex;
  align-items: flex-start;
  padding: 7px 0 0 19px;
  gap: 7px;
  font-size: 12px;
  color: #6a6a6a;
  overflow: hidden;
}
.b-folder { width: 15px; height: 12px; flex: none; }
.b-track { width: 908px; background: #858585; border-right: 1px solid #6f6f6f; padding: 1px 25px 0 3px; }
.b-thumb { height: 8px; border-radius: 4px; background: #6b6b6b; }
.b-right { flex: 1; background: linear-gradient(90deg, #8f8f8f, #a9a9a9 60%, #d4d4d4); }

.dock {
  width: 1300px;
  height: 50px;
  margin: 1px 0 0 33px;
  padding-left: 3px;
  flex: none;
  display: flex;
  border-radius: 12px;
  background: linear-gradient(90deg, #5f5390 0%, #6a5499 25%, #7b55b0 50%, #a04fd8 72%, #8a52c0 88%, #7552ac 100%);
  box-shadow: inset 0 0 0 1px rgba(255, 255, 255, .12);
}
.dk { width: 41.88px; flex: none; display: flex; flex-direction: column; align-items: center; position: relative; }
.dk svg { width: 42px; height: 45px; overflow: visible; flex: none; }
.dot { width: 3px; height: 3px; border-radius: 50%; background: #0f0a1a; }
.dot-off { visibility: hidden; }
.dk-sep { width: 1px; height: 37px; margin: 7px 9px 0; background: #33245c; flex: none; }
.badge {
  position: absolute;
  top: 0;
  left: 24px;
  min-width: 15px;
  height: 15px;
  padding: 0 3px;
  border-radius: 8px;
  background: #e5353f;
  color: #fff;
  font-size: 8px;
  display: flex;
  align-items: center;
  justify-content: center;
}
.badge-wide { left: 8px; top: 5px; height: 13px; width: 28px; padding: 0; font-size: 7px; }
.d-s { font: 700 24px "Liberation Sans", sans-serif; fill: #fff; text-anchor: middle; }
.d-fz { font: italic 700 30px "Liberation Sans", sans-serif; fill: #fff; text-anchor: middle; }
.d-tv { font: 500 15px Inter, sans-serif; fill: #fff; }
```
